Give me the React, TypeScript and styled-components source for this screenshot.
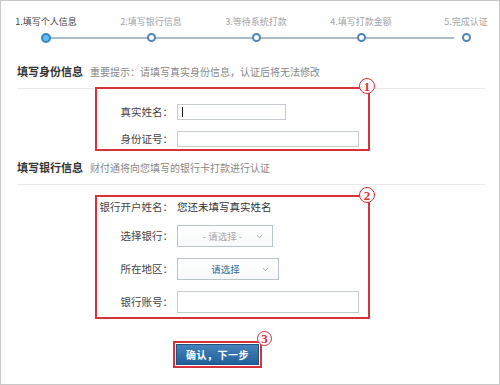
import React from 'react';
import styled, { createGlobalStyle } from 'styled-components';
import { ChevronDown } from 'lucide-react';

const GlobalStyle = createGlobalStyle`
  html, body {
    margin: 0;
    padding: 0;
    background: #fff;
  }
  body {
    font-family: "Noto Sans CJK SC", "Noto Sans", sans-serif;
  }
`;

const Frame = styled.div`
  width: 500px;
  height: 385px;
  box-sizing: border-box;
  border: 1px solid #c8c8c8;
  padding: 15px 14px 0 16px;
  background: #fff;
  overflow: hidden;
`;

const Steps = styled.div`
  position: relative;
  display: grid;
  grid-template-columns: repeat(5, 62px);
  column-gap: 43px;
  margin-left: -2px;

  &::before {
    content: '';
    position: absolute;
    left: 31px;
    right: 31px;
    top: 21px;
    height: 2px;
    background: #a9bccb;
  }
`;

const Step = styled.div`
  display: flex;
  flex-direction: column;
  align-items: center;
  gap: 5px;
`;

const StepLabel = styled.span<{ $active?: boolean }>`
  font-size: 9px;
  line-height: 12px;
  white-space: nowrap;
  color: ${(p) => (p.$active ? '#444' : '#a3a3a3')};
`;

const Dot = styled.span<{ $active?: boolean }>`
  position: relative;
  z-index: 1;
  width: ${(p) => (p.$active ? 10 : 9)}px;
  height: ${(p) => (p.$active ? 10 : 9)}px;
  margin-top: ${(p) => (p.$active ? -0.5 : 0)}px;
  margin-bottom: ${(p) => (p.$active ? -0.5 : 0)}px;
  box-sizing: border-box;
  border-radius: 50%;
  border: 2px solid ${(p) => (p.$active ? '#2f86c8' : '#4f86b5')};
  background: ${(p) => (p.$active ? '#66bbee' : '#fff')};
`;

const SectionHead = styled.div<{ $top: number }>`
  display: flex;
  align-items: baseline;
  gap: 7px;
  margin-top: ${(p) => p.$top}px;
  line-height: 16px;
`;

const HeadTitle = styled.span`
  font-size: 11px;
  font-weight: bold;
  color: #333;
`;

const HeadHint = styled.span`
  font-size: 10px;
  color: #888;
`;

const Divider = styled.div`
  margin-top: 8px;
  height: 1px;
  background: #e9e9e9;
`;

const RedBox = styled.div<{ $top: number; $padTop: number; $padBottom: number }>`
  position: relative;
  box-sizing: border-box;
  width: 275px;
  margin-left: 78px;
  margin-top: ${(p) => p.$top}px;
  padding: ${(p) => p.$padTop}px 0 ${(p) => p.$padBottom}px;
  border: 2px solid #d9313a;
  display: flex;
  flex-direction: column;
  gap: 11px;
`;

const Badge = styled.span<{ $size?: number; $top: number; $right: number }>`
  position: absolute;
  top: ${(p) => p.$top}px;
  right: ${(p) => p.$right}px;
  width: ${(p) => p.$size ?? 16}px;
  height: ${(p) => p.$size ?? 16}px;
  box-sizing: border-box;
  border-radius: 50%;
  border: 1.5px solid #d9313a;
  background: #fff;
  color: #d9313a;
  display: flex;
  align-items: center;
  justify-content: center;
  font-family: "Liberation Serif", serif;
  font-weight: bold;
  font-size: 13px;
  line-height: 1;
`;

const Row = styled.div`
  display: grid;
  grid-template-columns: 76px auto;
  column-gap: 4px;
  align-items: center;
`;

const Label = styled.span`
  font-size: 10.5px;
  line-height: 14px;
  color: #444;
  text-align: right;
  white-space: nowrap;
`;

const Value = styled.span`
  font-size: 10.5px;
  line-height: 14px;
  color: #333;
  white-space: nowrap;
`;

const Field = styled.div<{ $w: number; $h: number }>`
  width: ${(p) => p.$w}px;
  height: ${(p) => p.$h}px;
  box-sizing: border-box;
  border: 1px solid #c5cdd3;
  background: #fff;
  display: flex;
  align-items: center;
  padding-left: 4px;
`;

const Caret = styled.span`
  width: 1px;
  height: 10px;
  background: #222;
`;

const Select = styled.div<{ $w: number }>`
  width: ${(p) => p.$w}px;
  height: 22px;
  box-sizing: border-box;
  border: 1px solid #b9c3ca;
  background: linear-gradient(#fff, #f7f9fa);
  display: flex;
  align-items: center;
  padding: 0 8px 0 12px;
`;

const SelectText = styled.span<{ $blue?: boolean }>`
  flex: 1;
  text-align: center;
  font-size: 9.5px;
  white-space: nowrap;
  color: ${(p) => (p.$blue ? '#2d6d9c' : '#a8a8a8')};
`;

const ButtonFrame = styled.div`
  position: relative;
  align-self: flex-start;
  margin-top: 22px;
  margin-left: 156px;
  padding: 1px;
  border: 2px solid #d9313a;
  width: fit-content;
`;

const Button = styled.button`
  display: block;
  width: 83px;
  height: 21px;
  box-sizing: border-box;
  border: 1px solid #1f5285;
  background: linear-gradient(#4582ba, #21609a);
  color: #fff;
  font-family: "Noto Sans CJK SC", sans-serif;
  font-size: 10px;
  font-weight: bold;
  letter-spacing: 0.5px;
  padding: 0;
  cursor: pointer;
`;

const steps = ['1.填写个人信息', '2.填写银行信息', '3.等待系统打款', '4.填写打款金额', '5.完成认证'];

export default function App() {
  return (
    <>
      <GlobalStyle />
      <Frame>
        <Steps>
          {steps.map((s, i) => (
            <Step key={s}>
              <StepLabel $active={i === 0}>{s}</StepLabel>
              <Dot $active={i === 0} />
            </Step>
          ))}
        </Steps>

        <SectionHead $top={21}>
          <HeadTitle>填写身份信息</HeadTitle>
          <HeadHint>重要提示：请填写真实身份信息，认证后将无法修改</HeadHint>
        </SectionHead>
        <Divider />
        <RedBox $top={-2} $padTop={15} $padBottom={2}>
          <Badge $top={-11} $right={-7}>1</Badge>
          <Row>
            <Label>真实姓名：</Label>
            <Field $w={109} $h={16}>
              <Caret />
            </Field>
          </Row>
          <Row>
            <Label>身份证号：</Label>
            <Field $w={182} $h={16} />
          </Row>
        </RedBox>

        <SectionHead $top={8}>
          <HeadTitle>填写银行信息</HeadTitle>
          <HeadHint>财付通将向您填写的银行卡打款进行认证</HeadHint>
        </SectionHead>
        <Divider />
        <RedBox $top={10} $padTop={3} $padBottom={4}>
          <Badge $top={-10} $right={-7}>2</Badge>
          <Row>
            <Label>银行开户姓名：</Label>
            <Value>您还未填写真实姓名</Value>
          </Row>
          <Row>
            <Label>选择银行：</Label>
            <Select $w={96}>
              <SelectText>- 请选择 -</SelectText>
              <ChevronDown size={9} color="#888" strokeWidth={2} />
            </Select>
          </Row>
          <Row>
            <Label>所在地区：</Label>
            <Select $w={102}>
              <SelectText $blue>请选择</SelectText>
              <ChevronDown size={9} color="#888" strokeWidth={2} />
            </Select>
          </Row>
          <Row>
            <Label>银行账号：</Label>
            <Field $w={182} $h={22} />
          </Row>
        </RedBox>

        <ButtonFrame>
          <Badge $size={15} $top={-12} $right={-12}>3</Badge>
          <Button>确认，下一步</Button>
        </ButtonFrame>
      </Frame>
    </>
  );
}
